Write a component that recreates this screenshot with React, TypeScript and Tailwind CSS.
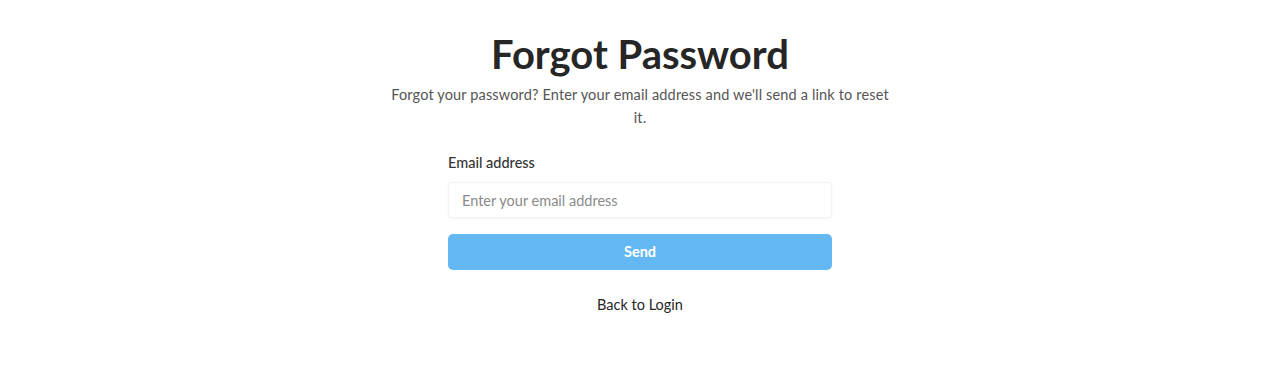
import { useState } from "react";

const ForgotPassword = () => {
  const [email, setEmail] = useState("");

  return (
    <div
      className="w-full min-h-[370px] bg-white flex flex-col items-center pt-[30px]"
      style={{ fontFamily: 'Lato, "Liberation Sans", sans-serif' }}
    >
      {/* title */}
      <h1 className="text-[40px] leading-[48px] font-bold text-[#262626]">
        Forgot Password
      </h1>
      <p className="w-[502px] mt-[5px] text-center text-[14.5px] tracking-[0.15px] leading-[23px] text-[#555555]">
        Forgot your password? Enter your email address and we'll send a link to
        reset it.
      </p>
      {/* form */}
      <form action="#" className="w-[384px] mt-[23px] flex flex-col">
        <label htmlFor="email" className="text-[14.5px] leading-[22px] font-medium text-[#333333]">
          Email address
        </label>
        <input
          id="email"
          type="email"
          value={email}
          onChange={(e) => setEmail(e.target.value)}
          placeholder="Enter your email address"
          className="mt-[8px] h-[36px] px-[13px] text-[14.5px] rounded-[4px] border border-[#f3f3f3] shadow-[0_1px_3px_rgba(0,0,0,0.04)] placeholder:text-[#8a8a8a] focus:outline-none"
        />
        <button
          type="button"
          className="mt-[16px] h-[36px] rounded-[5px] bg-[#63b8f3] text-white text-[14.5px] font-bold"
        >
          Send
        </button>
      </form>
      <a href="#" className="mt-[24px] text-[14.5px] text-[#262626]">
        Back to Login
      </a>
    </div>
  );
};

export default function App() {
  return <ForgotPassword />;
}
